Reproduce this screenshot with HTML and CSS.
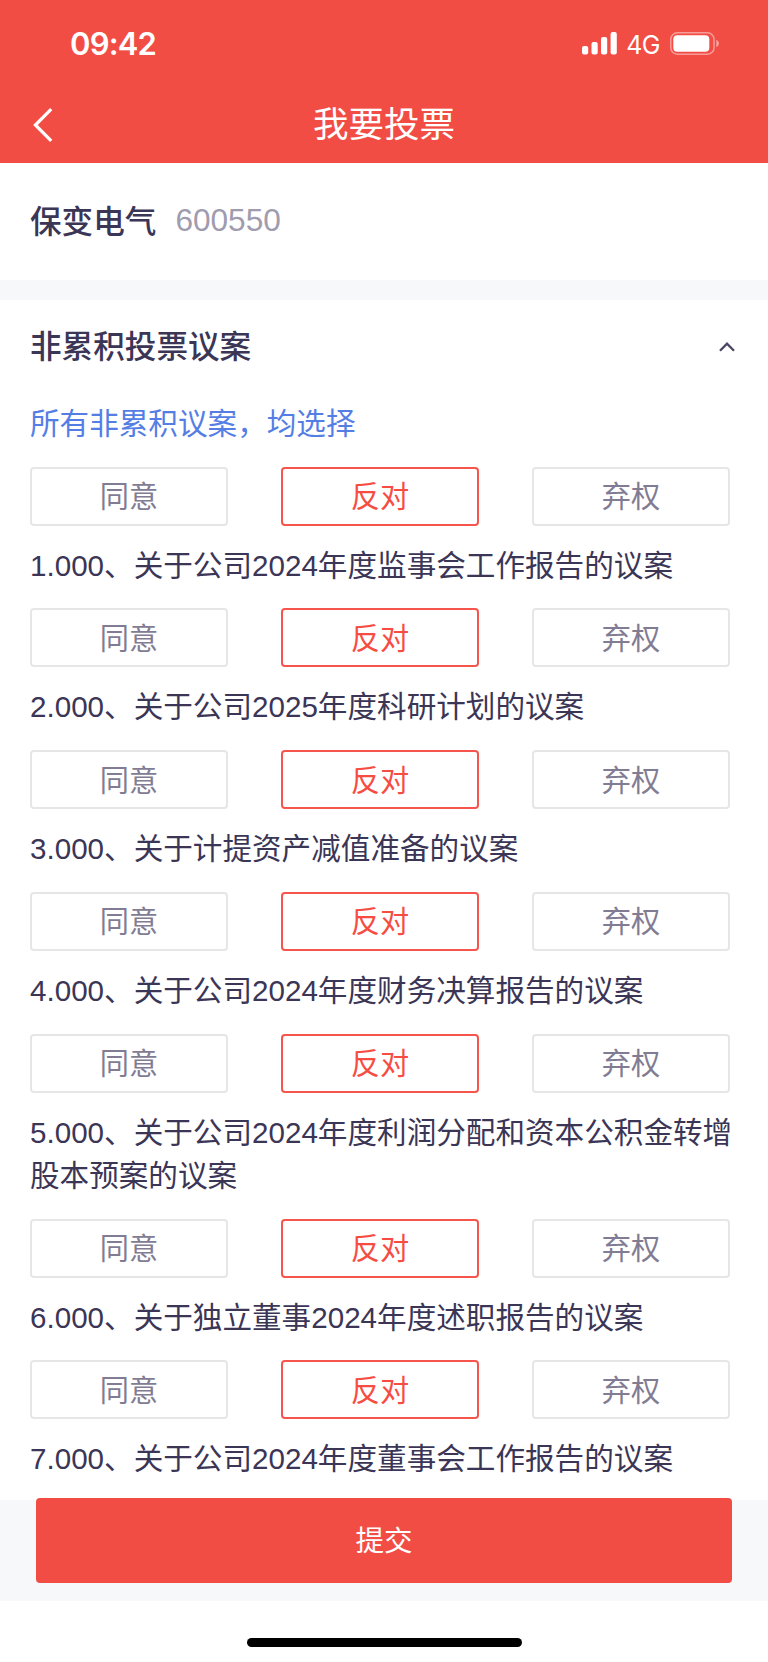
FILE: index.html
```html
<!DOCTYPE html>
<html lang="zh-CN">
<head>
<meta charset="utf-8">
<title>我要投票</title>
<link rel="stylesheet" href="styles.css">
</head>
<body>
<header class="top">
  <div class="status">
    <span class="time">09:42</span>
    <div class="indicators">
      <svg class="signal" width="36" height="23" viewBox="0 0 36 23" fill="#fff">
        <rect x="0" y="14" width="6.2" height="8.6" rx="2"/>
        <rect x="9.5" y="10" width="6.2" height="12.6" rx="2"/>
        <rect x="19" y="5" width="6.2" height="17.6" rx="2"/>
        <rect x="28.6" y="0" width="6.2" height="22.6" rx="2"/>
      </svg>
      <span class="network">4G</span>
      <svg class="battery" width="50" height="23" viewBox="0 0 50 23">
        <rect x=".8" y=".8" width="43.2" height="21.4" rx="6.5" fill="none" stroke="#fff" stroke-opacity=".45" stroke-width="1.5"/>
        <rect x="3.3" y="3.3" width="36" height="16.4" rx="4" fill="#fff"/>
        <path d="M46.3 8v7c1.7-.6 2.6-2 2.6-3.5S48 8.600 46.300 8z" fill="#fff" fill-opacity=".5"/>
      </svg>
    </div>
  </div>
  <nav class="nav">
    <svg class="back" width="20" height="34" viewBox="0 0 20 34" fill="none" stroke="#fff" stroke-width="3.2"><path d="M18.200 1.200 2.400 17l15.800 15.800"/></svg>
    <h1 class="title">我要投票</h1>
  </nav>
</header>
<section class="company"><strong class="name">保变电气</strong><span class="code">600550</span></section>
<main class="motions">
  <div class="section-head">
    <h2 class="section-title">非累积投票议案</h2>
    <svg class="chevron" width="16" height="10" viewBox="0 0 16 10" fill="none" stroke="#4b4664" stroke-width="2.300"><path d="M1 8.700 8 1.700l7 7"/></svg>
  </div>
  <p class="all">所有非累积议案，均选择</p>
  <div class="choices"><button class="choice">同意</button><button class="choice on">反对</button><button class="choice">弃权</button></div>
  <p class="motion">1.000、关于公司2024年度监事会工作报告的议案</p>
  <div class="choices"><button class="choice">同意</button><button class="choice on">反对</button><button class="choice">弃权</button></div>
  <p class="motion">2.000、关于公司2025年度科研计划的议案</p>
  <div class="choices"><button class="choice">同意</button><button class="choice on">反对</button><button class="choice">弃权</button></div>
  <p class="motion">3.000、关于计提资产减值准备的议案</p>
  <div class="choices"><button class="choice">同意</button><button class="choice on">反对</button><button class="choice">弃权</button></div>
  <p class="motion">4.000、关于公司2024年度财务决算报告的议案</p>
  <div class="choices"><button class="choice">同意</button><button class="choice on">反对</button><button class="choice">弃权</button></div>
  <p class="motion">5.000、关于公司2024年度利润分配和资本公积金转增股本预案的议案</p>
  <div class="choices"><button class="choice">同意</button><button class="choice on">反对</button><button class="choice">弃权</button></div>
  <p class="motion">6.000、关于独立董事2024年度述职报告的议案</p>
  <div class="choices"><button class="choice">同意</button><button class="choice on">反对</button><button class="choice">弃权</button></div>
  <p class="motion">7.000、关于公司2024年度董事会工作报告的议案</p>
</main>
<footer class="footer"><button class="submit">提交</button></footer>
<div class="home"><div class="home-bar"></div></div>
</body>
</html>
```
FILE: styles.css
```css
* { box-sizing: border-box; margin: 0; padding: 0; }
body {
  display: flex;
  flex-direction: column;
  width: 768px;
  height: 1662px;
  overflow: hidden;
  background: #fff;
  color: #3b3556;
  font-family: "Liberation Sans", "Noto Sans CJK SC", sans-serif;
}
.top { height: 163.400px; flex: none; background: #f24d45; color: #fff; }
.status {
  display: flex;
  justify-content: space-between;
  align-items: center;
  height: 87px;
  padding: 0 48px 0 70px;
}
.time { font: 600 31px/40px Inter, sans-serif; letter-spacing: -.8px; }
.indicators { display: flex; align-items: center; }
.network { margin: 2px 10px 0 8px; font: 400 25px/30px Inter, sans-serif; letter-spacing: -.5px; }
.nav { display: grid; grid-template-columns: 60px 1fr 60px; align-items: center; height: 76px; }
.back { margin-left: 33px; }
.title { font-size: 35.500px; font-weight: 400; line-height: 50px; text-align: center; }
.company {
  display: flex;
  align-items: center;
  gap: 19px;
  flex: none;
  height: 116.600px;
  padding: 0 30px 3px;
  font-size: 31.600px;
}
.name { margin-top: -3px; font-weight: 500; }
.code { color: #a09caf; }
.motions { flex: none; height: 1220px; padding: 0 30px; border-top: 20px solid #f7f8fa; }
.section-head { display: flex; justify-content: space-between; align-items: center; height: 95px; padding-right: 3px; }
.section-title { font-size: 31.600px; font-weight: 500; line-height: 46px; }
.all { height: 71.800px; padding-top: 7px; color: #557ee5; font-size: 29.600px; line-height: 43.200px; }
.choices { display: grid; grid-template-columns: repeat(3, 198px); justify-content: space-between; width: 700px; }
.choice {
  height: 59px;
  padding-top: 3px;
  border: 2px solid #e6e6e6;
  border-radius: 4px;
  background: #fff;
  color: #817c93;
  font: 400 29.200px/43px "Liberation Sans", "Noto Sans CJK SC", sans-serif;
}
.on { border-color: #f5554d; color: #f74c42; }
.motion { padding: 18px 0 21.500px; width: 712px; font-size: 29.600px; line-height: 43.200px; }
.footer { height: 101px; flex: none; padding: 0 36px; background: #f7f8fa; }
.submit {
  display: block;
  width: 100%;
  height: 85px;
  margin-top: -2px;
  padding-top: 2px;
  border: 0;
  border-radius: 4px;
  background: #f24d45;
  color: #fff;
  font: 400 28.500px/42px "Liberation Sans", "Noto Sans CJK SC", sans-serif;
}
.home { flex: 1; display: flex; justify-content: center; align-items: flex-start; padding-top: 37px; }
.home-bar { width: 275px; height: 9px; border-radius: 5px; background: #000; }
```
